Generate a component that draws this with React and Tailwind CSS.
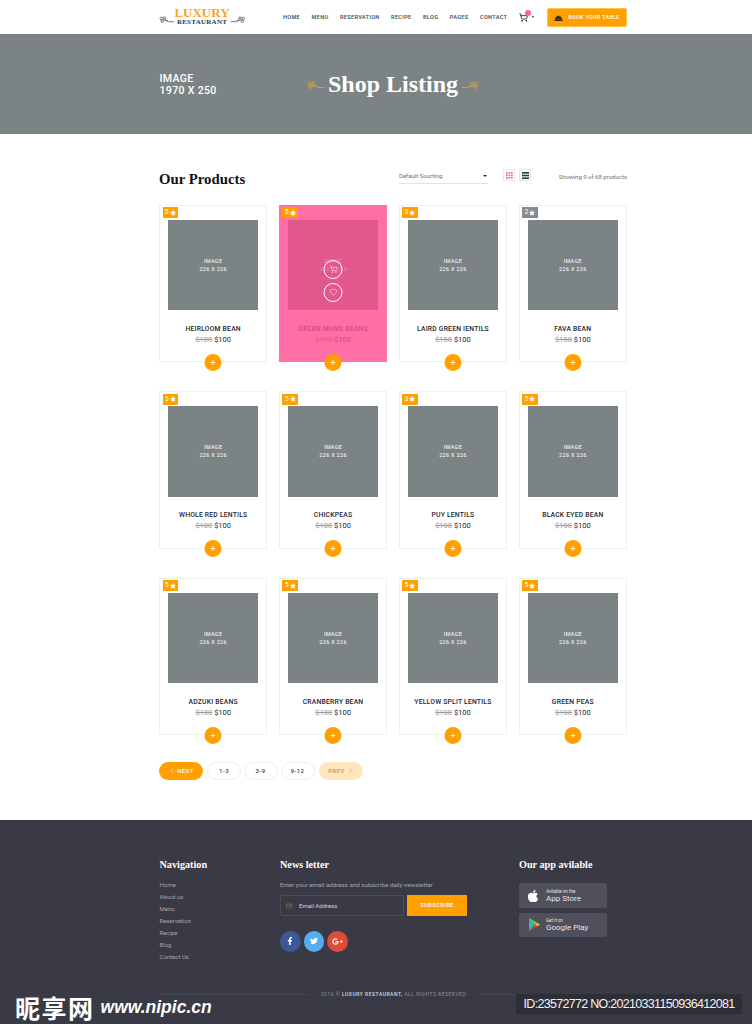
import React from "react";
import { ShoppingCart, Heart, ChevronLeft, ChevronRight, Star, Plus, Mail } from "lucide-react";
import { FaFacebookF, FaTwitter, FaGooglePlusG, FaApple } from "react-icons/fa";

const serif = "font-['Liberation_Serif',serif]";

const Ornament = ({ flip = false, color = "#d9a441", className = "" }) => (
  <svg viewBox="0 0 20 10" className={className} style={flip ? { transform: "scaleX(-1)" } : undefined} fill="none" stroke={color} strokeWidth="1">
    <circle cx="3" cy="3" r="1.7" />
    <circle cx="7" cy="2.4" r="1.5" />
    <circle cx="4" cy="6.6" r="1.6" />
    <path d="M5 5c3 .2 5 1 7 2.2h7.5M8 4c1 .8 2 1.4 3.5 2" />
  </svg>
);

const products = [
  ["HEIRLOOM BEAN", 5], ["GREEN MUNG BEANS", 5], ["LAIRD GREEN IENTILS", 3], ["FAVA BEAN", 2],
  ["WHOLE RED LENTILS", 5], ["CHICKPEAS", 5], ["PUY LENTILS", 3], ["BLACK EYED BEAN", 5],
  ["ADZUKI BEANS", 5], ["CRANBERRY BEAN", 5], ["YELLOW SPLIT LENTILS", 5], ["GREEN PEAS", 5],
];

function Card({ name, rating, active }) {
  return (
    <div className={`relative h-[157.5px] border pt-[14px] ${active ? "bg-[#ff6fa5] border-[#ff6fa5]" : "bg-white border-[#f0f0f0]"}`}>
      <div className={`absolute left-[2.5px] top-[1.5px] flex h-[11px] w-[15.5px] items-center justify-center gap-[1px] text-[7px] leading-none text-white ${rating === 2 ? "bg-[#858b90]" : "bg-[#ffa000]"}`}>
        <span>{rating}</span>
        <Star size={6} fill="white" stroke="white" />
      </div>
      <div className={`mx-auto flex h-[90.5px] w-[90.5px] flex-col items-center justify-center text-center text-[5.5px] leading-[8px] tracking-[0.3px] ${active ? "bg-[#e3588c] text-[#ee84ab]" : "bg-[#7c8384] text-white"}`}>
        <span>IMAGE</span>
        <span>226 X 226</span>
      </div>
      {active && (
        <div className="absolute left-1/2 top-[54px] flex -translate-x-1/2 flex-col gap-[4px]">
          <span className="flex h-[19px] w-[19px] items-center justify-center rounded-full border border-white"><ShoppingCart size={8} color="white" strokeWidth={1.5} /></span>
          <span className="flex h-[19px] w-[19px] items-center justify-center rounded-full border border-white"><Heart size={8} color="white" strokeWidth={1.5} /></span>
        </div>
      )}
      <div className={`mt-[13.5px] text-center text-[6.8px] font-medium leading-[10px] tracking-[0.2px] ${active ? "text-[#d9487f]" : "text-[#26262e]"}`}>{name}</div>
      <div className="mt-[1px] text-center text-[7.5px] leading-[10px]">
        <span className={`line-through ${active ? "text-[#ee5f97]" : "text-[#9a9ea3]"}`}>$100</span>{" "}
        <span className={active ? "text-[#d9487f]" : "text-[#26262e]"}>$100</span>
      </div>
      <button className="absolute bottom-[-9.5px] left-1/2 flex h-[17px] w-[17px] -translate-x-1/2 items-center justify-center rounded-full bg-[#ffa000]">
        <Plus size={7} color="white" strokeWidth={3} />
      </button>
    </div>
  );
}

const nav = ["HOME", "MENU", "RESERVATION", "RECIPE", "BLOG", "PAGES", "CONTACT"];
const footerNav = ["Home", "About us", "Menu", "Reservation", "Recipe", "Blog", "Contact Us"];

export default function App() {
  return (
    <div className="relative h-[1024px] w-[752px] overflow-hidden bg-white font-['Roboto',sans-serif]">
      <header className="flex h-[34px] items-center pl-[159px] pr-[125px]">
        <div className="flex w-[86px] shrink-0 items-center justify-between">
          <Ornament color="#4a5560" className="mt-[6px] h-[8px] w-[16px]" />
          <div className={`${serif} flex flex-col items-center font-bold`}>
            <span className="text-[13px] leading-[10px] text-[#ffa21a]">LUXURY</span>
            <span className="mt-[1px] text-[7px] leading-[7px] tracking-[0.25px] text-[#2c3a4a]">RESTAURANT</span>
          </div>
          <Ornament flip color="#4a5560" className="mt-[6px] h-[8px] w-[16px]" />
        </div>
        <nav className="ml-[38px] flex items-center gap-[11.5px] text-[5.6px] font-medium tracking-[0.3px] text-[#3d4a58]">
          {nav.map((n) => <span key={n}>{n}</span>)}
        </nav>
        <div className="ml-[12px] flex items-center">
          <div className="relative">
            <ShoppingCart size={9} color="#1e2a38" strokeWidth={2.4} />
            <span className="absolute -right-[3px] -top-[3px] h-[6px] w-[6px] rounded-full bg-[#ff5f9e]" />
          </div>
          <span className="ml-[3.5px] h-0 w-0 border-x-[1.7px] border-t-[2px] border-x-transparent border-t-[#333]" />
        </div>
        <button className="ml-auto flex h-[19px] w-[80px] items-center justify-center gap-[5px] rounded-[2px] border border-[#ffc04d] bg-[#ffa000] text-[5.4px] font-bold tracking-[0.3px] text-[#fff2d8]">
          <svg viewBox="0 0 12 10" className="h-[7px] w-[9px]" fill="#3a2a10"><path d="M1 8a5 5 0 0 1 10 0zM0 8.3h12V10H0zM5.2 2a.8.8 0 1 1 1.6 0z" /></svg>
          BOOK YOUR TABLE
        </button>
      </header>

      <section className="flex h-[100px] items-center bg-[#7c8384] pl-[159.5px]">
        <div className="mt-[2px] w-[147.5px] text-[10.6px] font-medium leading-[12px] tracking-[0.3px] text-white">IMAGE<br />1970 X 250</div>
        <div className="flex items-center gap-[3px]">
          <Ornament color="#d9a441" className="mt-[2px] h-[9px] w-[18px]" />
          <h1 className={`${serif} text-[24px] font-bold leading-none text-white`}>Shop Listing</h1>
          <Ornament flip color="#d9a441" className="mt-[2px] h-[9px] w-[18px]" />
        </div>
      </section>

      <main className="ml-[159px] w-[468px]">
        <div className="flex h-[70.5px] items-start pt-[35px]">
          <h2 className={`${serif} w-[240px] text-[14.8px] font-bold leading-[20px] text-[#111]`}>Our Products</h2>
          <div className="flex h-[15px] w-[89px] items-center justify-between border-b border-[#dfe3e6] pb-[1px] text-[6px] text-[#68707a]">
            <span>Default Sourting</span>
            <span className="mr-[1.5px] h-0 w-0 border-x-[2px] border-t-[2.5px] border-x-transparent border-t-[#1e2a38]" />
          </div>
          <span className="ml-[15px] flex h-[12px] w-[12px] items-center justify-center border border-[#e6e8ea]">
            <svg viewBox="0 0 7 7" className="h-[7px] w-[7px]" fill="#ff5f9e">
              {[0, 2.5, 5].flatMap((y) => [0, 2.5, 5].map((x) => <rect key={`${x}-${y}`} x={x} y={y} width="1.7" height="1.7" />))}
            </svg>
          </span>
          <span className="ml-[4px] flex h-[12px] w-[12px] items-center justify-center border border-[#e6e8ea]">
            <svg viewBox="0 0 7 7" className="h-[7px] w-[7px]" fill="#27394d"><rect width="7" height="1.6" /><rect y="2.7" width="7" height="1.6" /><rect y="5.4" width="7" height="1.6" /></svg>
          </span>
          <span className="ml-auto mt-[3px] text-[6px] leading-[10px] text-[#68707a]">Showing 9 of 68 products</span>
        </div>

        <div className="grid grid-cols-4 gap-x-[11.5px] gap-y-[29px]">
          {products.map(([n, r], i) => <Card key={n} name={n} rating={r} active={i === 1} />)}
        </div>

        <div className="mt-[27px] flex items-center text-[6px] font-medium tracking-[0.3px]">
          <span className="flex h-[17.5px] w-[44px] items-center justify-center gap-[2px] rounded-full bg-[#ffa000] font-bold text-[#fff2d8]"><ChevronLeft size={7} strokeWidth={2.5} />NEXT</span>
          <span className="ml-[4px] flex h-[17.5px] w-[34px] items-center justify-center rounded-full border border-[#eeeeee] text-[#3d4550]">1-3</span>
          <span className="ml-[2.5px] flex h-[17.5px] w-[34px] items-center justify-center rounded-full border border-[#eeeeee] text-[#3d4550]">3-9</span>
          <span className="ml-[3px] flex h-[17.5px] w-[34px] items-center justify-center rounded-full border border-[#eeeeee] text-[#3d4550]">9-12</span>
          <span className="ml-[4.5px] flex h-[17.5px] w-[44px] items-center justify-center gap-[2px] rounded-full bg-[#ffe6bf] font-bold text-[#dfa050]">PREV<ChevronRight size={7} strokeWidth={2.5} /></span>
        </div>
      </main>

      <footer className="absolute inset-x-0 top-[820px] h-[204px] bg-[#3a3a46]">
        <div className="ml-[159.5px] flex w-[468px] pt-[38px]">
          <div className="w-[120.5px]">
            <h3 className={`${serif} text-[10.2px] font-bold leading-[14px] text-white`}>Navigation</h3>
            <ul className="mt-[7px] text-[6px] leading-[12px] text-[#a4a4ae]">
              {footerNav.map((n) => <li key={n}>{n}</li>)}
            </ul>
          </div>
          <div className="w-[239px]">
            <h3 className={`${serif} text-[10.2px] font-bold leading-[14px] text-white`}>News letter</h3>
            <p className="mt-[7px] text-[6.2px] leading-[12px] text-[#a4a4ae]">Enter your email address and subscribe daily newsletter</p>
            <div className="mt-[4px] flex gap-[3.5px]">
              <div className="flex h-[21px] w-[123.5px] items-center gap-[7px] rounded-[2px] border border-[#4c4c58] pl-[5px] text-[6px] text-[#d2d2d8]">
                <Mail size={6} color="#b07c20" strokeWidth={2} />
                Email Address
              </div>
              <span className="flex h-[21px] w-[60px] items-center justify-center bg-[#ffa000] text-[5.6px] font-bold tracking-[0.4px] text-[#fff2d8]">SUBSCRIBE</span>
            </div>
            <div className="mt-[15px] flex gap-[3px]">
              <span className="flex h-[20.5px] w-[20.5px] items-center justify-center rounded-full bg-[#3b5998]"><FaFacebookF size={8} color="white" /></span>
              <span className="flex h-[20.5px] w-[20.5px] items-center justify-center rounded-full bg-[#55acee]"><FaTwitter size={8} color="white" /></span>
              <span className="flex h-[20.5px] w-[20.5px] items-center justify-center rounded-full bg-[#dd4b39]"><FaGooglePlusG size={11} color="white" /></span>
            </div>
          </div>
          <div>
            <h3 className={`${serif} text-[10.2px] font-bold leading-[14px] text-white`}>Our app avilable</h3>
            <div className="mt-[11px] flex h-[25px] w-[88px] items-center gap-[6px] rounded-[2px] bg-[#50505c] pl-[7px] text-white">
              <FaApple size={14} color="white" />
              <div className="flex flex-col text-[#e4e4e8]"><span className="text-[4.5px] leading-[5px]">Avilable on the</span><span className="text-[8px] leading-[9px]">App Store</span></div>
            </div>
            <div className="mt-[4.5px] flex h-[24.5px] w-[88px] items-center gap-[6px] rounded-[2px] bg-[#50505c] pl-[10px]">
              <svg viewBox="0 0 12 14" className="h-[13px] w-[11px]"><path d="M0 0l6.5 7L0 14z" fill="#3fb5a8" /><path d="M0 0l9 5-2.5 2z" fill="#8cc152" /><path d="M9 5l3 2-3 2-2.5-2z" fill="#ffc107" /><path d="M0 14l9-5-2.5-2z" fill="#e0413a" /></svg>
              <div className="flex flex-col text-[#e4e4e8]"><span className="text-[4.5px] leading-[5px]">Get it on</span><span className="text-[8px] leading-[9px]">Google Play</span></div>
            </div>
          </div>
        </div>
        <div className="absolute left-[160px] top-[171px] flex w-[467px] items-center text-[5px] tracking-[0.5px] text-[#8e8e98]">
          <span className="h-px flex-1 bg-[#46464f]" />
          <span className="mx-[13px] whitespace-nowrap">2016 © <span className="font-medium text-[#d8d8dc]">LUXURY RESTAURANT,</span> ALL RIGHTS RESERVED</span>
          <span className="h-px flex-1 bg-[#46464f]" />
        </div>
      </footer>

      <div className="absolute left-[15px] top-[994px] flex items-center gap-[6px] text-white">
        <span className="font-['Noto_Sans_CJK_SC',sans-serif] text-[25px] font-bold leading-[26px] tracking-[1.5px]">昵享网</span>
        <span className="font-['Liberation_Sans',sans-serif] text-[17.5px] font-bold italic leading-[26px]">www.nipic.cn</span>
      </div>
      <div className="absolute left-[516px] top-[994px] flex h-[20px] w-[226px] items-center justify-center whitespace-nowrap bg-[#2e2e37] font-['Liberation_Sans',sans-serif] text-[12.5px] tracking-[-0.7px] text-[#f2f2f2]">
        ID:23572772 NO:20210331150936412081
      </div>
    </div>
  );
}
